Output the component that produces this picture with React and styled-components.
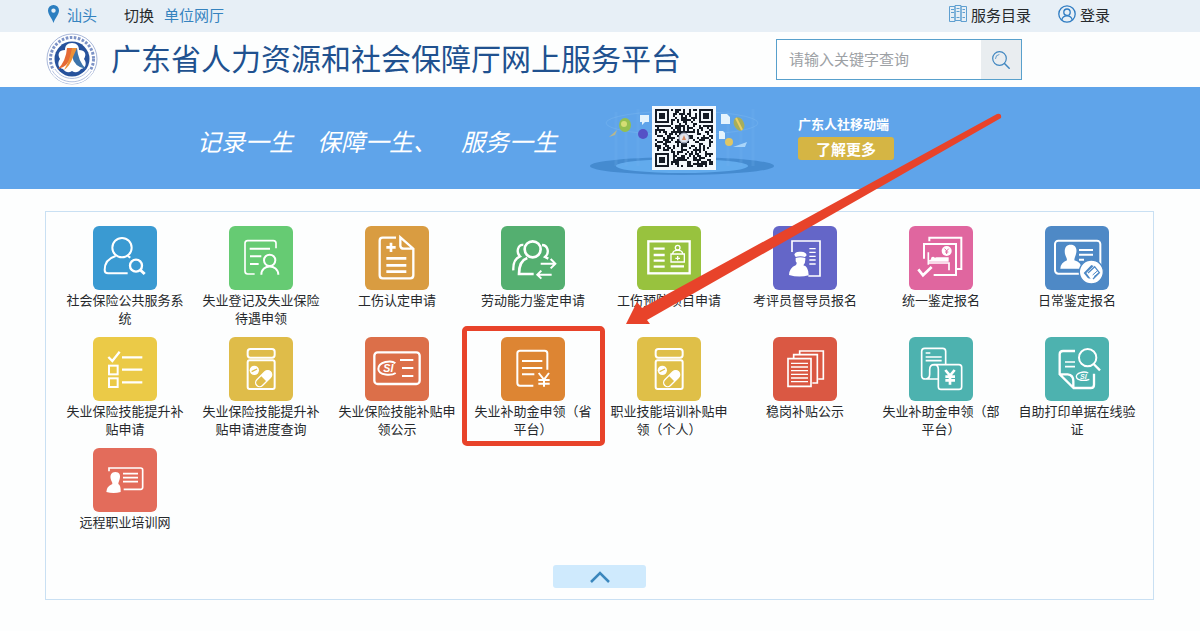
import React, { useState } from "react";
import styled, { createGlobalStyle } from "styled-components";

const Colors = {
  Page: "#fdfefe",
  TopBar: "#e7eff6",
  Text: "#26292c",
  Link: "#3583bf",
  Title: "#20518f",
  Banner: "#5fa4ea",
  Line: "#c9e0f3",
  Mark: "#e8432a",
};

const GlobalStyle = createGlobalStyle`
  * {
    box-sizing: border-box;
  }
  body {
    margin: 0;
    background: ${Colors.Page};
    color: ${Colors.Text};
    font-family: "Noto Sans CJK SC", sans-serif;
    overflow-x: hidden;
  }
  button, input {
    font-family: inherit;
    border: 0;
    padding: 0;
  }
  button {
    cursor: pointer;
  }
`;

/* ---- tile icons, all on a 192 grid ---- */

const PillBottle = ({ bg }) => (
  <>
    <rect x="56" y="36" width="81" height="26" rx="8" strokeWidth="6" />
    <rect x="56" y="70" width="81" height="86" rx="6" strokeWidth="6" />
    <circle cx="76" cy="100" r="14" fill="#fff" stroke="none" />
    <path d="M68 104L84 96" stroke={bg} strokeWidth="4" />
    <g transform="rotate(45 104 125)">
      <rect x="92" y="96" width="24" height="58" rx="12" strokeWidth="4" />
      <path d="M92 125V108A12 12 0 0 1 116 108V125Z" fill="#fff" stroke="none" />
    </g>
  </>
);

const icons = {
  personSearch: () => (
    <>
      <circle cx="87" cy="65" r="29" />
      <path d="M68 90C45 97 35 112 35 132Q35 142 45 142H104M104 90L112 95" />
      <circle cx="129" cy="119" r="18" strokeWidth="7" />
      <path d="M142 132L155 144" strokeWidth="9" />
    </>
  ),
  registerForm: () => (
    <>
      <path d="M77 144H56Q48 144 48 136V52Q48 44 56 44H133Q141 44 141 52V67" strokeWidth="5" />
      <path d="M62 68H123M63 91H97M63 114H89" />
      <circle cx="122" cy="103" r="17" />
      <path d="M97 146C97 113 147 113 148 146" />
    </>
  ),
  medicalFile: () => (
    <>
      <path d="M93 35H53Q44 35 44 44V148Q44 157 53 157H136Q145 157 145 148V68L106 34V60Q107 68 116 68H145" strokeWidth="7" />
      <path d="M64 64H92M78 50V78M64 97H124M64 118H124M64 137H124" strokeWidth="8" />
    </>
  ),
  peopleSwap: () => (
    <>
      <circle cx="95" cy="70" r="24" strokeWidth="8" />
      <path d="M79 96C58 103 54 125 54 144H98" strokeWidth="8" />
      <path d="M67 57C51 55 44 78 57 91C40 98 36 114 37 133M123 57C140 57 147 80 132 93L142 98" strokeWidth="7" />
      <path d="M119 113H162M149 99L163 113L149 127M152 146H110M121 134L109 146L121 158" strokeWidth="6" />
    </>
  ),
  preventBoard: () => (
    <>
      <rect x="34" y="46" width="124" height="96" strokeWidth="7" />
      <path d="M50 68H83M50 87H83M50 104H83M50 122H83M101 121H141" strokeWidth="7" />
      <circle cx="122" cy="65" r="7" strokeWidth="4" />
      <path d="M107 82Q109 72 122 73Q135 72 137 82M102 84H142V108H102ZM122 90V103M115 97H129" strokeWidth="4" />
    </>
  ),
  examiner: () => (
    <>
      <path d="M57 78V45H141V150H106" strokeWidth="5" />
      <path d="M109 68H128M109 79H128M109 91H128M109 102H128M109 114H128" strokeWidth="4" />
      <path d="M64 86Q66 76 82 77Q99 76 101 88L96 93Q82 88 68 93ZM68 96Q82 91 97 96Q98 112 91 118Q107 122 107 148Q78 156 48 147Q49 126 68 118Q74 112 68 106Z" fill="#fff" stroke="none" />
    </>
  ),
  bedExam: ({ bg }) => (
    <>
      <path d="M61 46V35H157V129H144M45 98V54H141V147H74" strokeWidth="6" />
      <path d="M28 130L42 148L68 123" strokeWidth="8" />
      <path d="M58 79V116M58 111H120V133" strokeWidth="5" />
      <circle cx="72" cy="98" r="6" fill="#fff" stroke="none" />
      <path d="M82 94H119V107H60V103Z" fill="#fff" stroke="none" />
      <circle cx="113" cy="75" r="15" fill="#fff" stroke="none" />
      <path d="M107 68L113 75L119 68M113 75V84M108 78H118" stroke={bg} strokeWidth="3" />
    </>
  ),
  idEdit: ({ bg }) => (
    <>
      <rect x="30" y="44" width="136" height="99" rx="10" strokeWidth="6" />
      <path d="M77 56C93 56 97 70 93 84C91 92 88 96 88 103Q109 109 110 128H46Q47 110 66 103C66 96 62 91 60 84C57 68 62 56 77 56Z" fill="#fff" stroke="none" />
      <path d="M102 72H144M102 86H144M102 101H117" strokeWidth="6" />
      <circle cx="139" cy="138" r="36" fill="#fff" stroke={bg} strokeWidth="4" />
      <path d="M116 141L139 117L146 120L124 141L137 158L129 157Z" fill={bg} stroke="none" />
      <path d="M129 141L149 122L163 140L144 159" stroke={bg} strokeWidth="4" />
      <path d="M143 147L158 134M147 152L161 141" stroke={bg} strokeWidth="3" />
    </>
  ),
  checklist: () => (
    <>
      <path d="M46 60L58 72L80 44M87 61H148M87 98H148M87 136H148" strokeWidth="7" />
      <rect x="48" y="86" width="26" height="26" strokeWidth="6" />
      <rect x="48" y="124" width="26" height="26" strokeWidth="6" />
    </>
  ),
  pillBottle: PillBottle,
  socialCard: () => (
    <>
      <rect x="28" y="46" width="136" height="95" rx="10" strokeWidth="7" />
      <path d="M91 79C79 68 40 74 40 96C41 116 80 116 92 108" strokeWidth="6" />
      <IconText x="70" y="106" size="32">SI</IconText>
      <path d="M105 69H145M111 93H145M111 117H145" />
    </>
  ),
  moneyForm: () => (
    <>
      <path d="M97 146H57Q49 146 49 138V49Q49 41 57 41H131Q139 41 139 49V98" />
      <path d="M63 72H124M63 93H124M63 112H100" />
      <path d="M113 108L129 128L144 108M129 128V149M112 129H146M112 140H146" strokeWidth="6" />
    </>
  ),
  paperStack: () => (
    <>
      <path d="M45 65H114V148H45ZM62 62V53H133V138H118M80 50V42H151V126H136" strokeWidth="5" />
      <path d="M54 79H105M54 90H105M54 101H105M54 112H105M54 123H105M54 134H105" strokeWidth="4" />
    </>
  ),
  receiptYuan: () => (
    <>
      <path d="M110 80V43Q110 34 101 34H47Q38 34 38 43V116Q38 126 50 126Q62 126 62 112V98Q62 83 76 83H150Q158 83 158 91V149Q158 157 150 157H96Q88 157 88 149V97Q88 84 76 83M50 126H88" strokeWidth="5" />
      <path d="M50 48H64M50 60H98M50 71H98" strokeWidth="5" />
      <path d="M109 99L123 116L137 99M123 116V143M109 119H138M109 130H138" strokeWidth="8" />
    </>
  ),
  printVerify: () => (
    <>
      <path d="M90 42H54Q44 42 44 52V112L86 153H137Q147 153 147 143V110M44 112H68Q85 114 85 132V152" strokeWidth="7" />
      <path d="M60 75H90M60 89H90" strokeWidth="5" />
      <circle cx="128" cy="62" r="26" />
      <path d="M146 81L165 100" strokeWidth="7" />
      <path d="M130 108C115 101 94 108 94 119C95 131 118 133 133 127" strokeWidth="4" />
      <IconText x="115" y="127" size="21">SI</IconText>
    </>
  ),
  remoteTraining: () => (
    <>
      <path d="M48 70V60H143Q149 60 149 66V118Q149 124 143 124H92" strokeWidth="5" />
      <path d="M90 77H135M90 89H135M90 101H135" strokeWidth="5" />
      <path d="M67 72C80 72 83 82 80 93C79 99 76 102 76 108Q84 112 83 132Q62 138 40 132Q40 116 58 108C59 102 54 99 53 92C51 81 55 72 67 72Z" fill="#fff" stroke="none" />
    </>
  ),
};

const services = [
  { name: "社会保险公共服务系统", icon: "personSearch", bg: "#3a9ad2" },
  { name: "失业登记及失业保险待遇申领", icon: "registerForm", bg: "#66cb73" },
  { name: "工伤认定申请", icon: "medicalFile", bg: "#d99c41" },
  { name: "劳动能力鉴定申请", icon: "peopleSwap", bg: "#54af70" },
  { name: "工伤预防项目申请", icon: "preventBoard", bg: "#98c23e" },
  { name: "考评员督导员报名", icon: "examiner", bg: "#6466c8" },
  { name: "统一鉴定报名", icon: "bedExam", bg: "#e0669f" },
  { name: "日常鉴定报名", icon: "idEdit", bg: "#4e89c6" },
  { name: "失业保险技能提升补贴申请", icon: "checklist", bg: "#ebca47" },
  { name: "失业保险技能提升补贴申请进度查询", icon: "pillBottle", bg: "#dfbc49" },
  { name: "失业保险技能补贴申领公示", icon: "socialCard", bg: "#dc6f49" },
  { name: "失业补助金申领（省平台）", icon: "moneyForm", bg: "#dd8533", marked: true },
  { name: "职业技能培训补贴申领（个人）", icon: "pillBottle", bg: "#dfbf48" },
  { name: "稳岗补贴公示", icon: "paperStack", bg: "#da5843" },
  { name: "失业补助金申领（部平台）", icon: "receiptYuan", bg: "#4db2af" },
  { name: "自助打印单据在线验证", icon: "printVerify", bg: "#4db2af" },
  { name: "远程职业培训网", icon: "remoteTraining", bg: "#e36c5b" },
];

const IconText = ({ x, y, size, children }) => (
  <text
    x={x}
    y={y}
    fontSize={size}
    textAnchor="middle"
    fill="#fff"
    stroke="none"
    fontWeight="700"
    fontStyle="italic"
    fontFamily="Liberation Sans, sans-serif"
  >
    {children}
  </text>
);

const PinIcon = () => (
  <svg width="11" height="18" viewBox="0 0 11 18" aria-hidden="true">
    <path d="M5.500 0A5.400 5.400 0 0 0 0 5.500C0 9.500 4 13 5.500 18C7 13 11 9.500 11 5.500A5.400 5.400 0 0 0 5.500 0ZM5.500 7.800A2.200 2.200 0 1 1 5.500 3.400A2.200 2.200 0 0 1 5.500 7.800Z" fill="#2d7fc0" />
  </svg>
);

const CatalogIcon = () => (
  <svg width="18" height="18" viewBox="0 0 18 18" fill="none" stroke="#5f9fd0" aria-hidden="true">
    <path d="M.5 1.500H6V16.500H.5ZM6 .5H12V15.500H6ZM12 1.500H17.500V16.500H12Z" />
    <path d="M2 4.500H5M2 7.500H5M2 12.500H5M7.500 3.500H10.500M7.500 6.500H10.500M7.500 12.500H10.500M13.500 4.500H16M13.500 7.500H16M13.500 12.500H16" />
  </svg>
);

const UserIcon = () => (
  <svg width="18" height="18" viewBox="0 0 18 18" fill="none" stroke="#2f7cc2" strokeWidth="1.3" aria-hidden="true">
    <circle cx="9" cy="9" r="8.200" />
    <circle cx="9" cy="7.200" r="3.200" />
    <path d="M3.800 15C4.300 11.800 6.500 10.800 9 10.800S13.700 11.800 14.200 15" />
  </svg>
);

const SearchIcon = () => (
  <svg width="18" height="18" viewBox="0 0 18 18" fill="none" stroke="#4087c0" strokeLinecap="round" aria-hidden="true">
    <circle cx="7.500" cy="7.500" r="6.800" strokeWidth="1.200" />
    <path d="M3.500 7.500A4 4 0 0 1 7 3.500" strokeWidth=".8" />
    <path d="M12.500 12.500L17.200 17.200" strokeWidth="1.500" />
  </svg>
);

const Emblem = () => (
  <svg width="52" height="52" viewBox="0 0 52 52" aria-hidden="true">
    <circle cx="26" cy="26" r="25" fill="#fff" stroke="#a9b8da" strokeWidth="1" />
    <circle cx="26" cy="26" r="21.500" fill="none" stroke="#7d93c6" strokeWidth="3" strokeDasharray="2.600 1.500" />
    <path d="M7 37A22 22 0 0 0 45 37" fill="none" stroke="#fff" strokeWidth="6" />
    <path d="M6.500 38A23 23 0 0 0 45.500 38M9 36A20 20 0 0 0 43 36" fill="none" stroke="#b4c1df" strokeWidth="1" />
    <circle cx="26" cy="26" r="17.500" fill="#27529c" />
    <path d="M26 10C31 10 33 13 33 17C39 17 41 21 38 26C41 30 40 35 35 36C32 40 29 40 26 38C23 40 20 40 17 36C12 35 11 30 14 26C11 21 13 17 19 17C19 13 21 10 26 10Z" fill="#fff" />
    <path d="M21 15H27L25 23Q22 34 12 36Q20 28 21 15Z" fill="#e56a35" />
    <path d="M26 15H31Q32 28 40 36Q28 34 26 23Z" fill="#3d74ab" />
    <path d="M26 15H31L27 24Q24 33 18 37Q24 27 26 15Z" fill="#ec9138" />
  </svg>
);

const QR_SIZE = 29;

const inFinder = (x, y) =>
  (x < 8 && y < 8) || (x > QR_SIZE - 9 && y < 8) || (x < 8 && y > QR_SIZE - 9);

const qrPath = () => {
  let d = "";
  let seed = 2019;
  for (let y = 0; y < QR_SIZE; y++) {
    for (let x = 0; x < QR_SIZE; x++) {
      seed = (seed * 1103515245 + 12345) % 2147483648;
      if (!inFinder(x, y) && (seed >> 16) % 100 < 53) d += `M${x} ${y}h1v1h-1z`;
    }
  }
  [[0, 0], [22, 0], [0, 22]].forEach(([x, y]) => {
    d += `M${x} ${y}h7v7h-7zM${x + 1} ${y + 1}v5h5v-5zM${x + 2} ${y + 2}h3v3h-3z`;
  });
  return d;
};

const QrArt = () => (
  <svg width="190" height="102" viewBox="0 0 190 102" role="img" aria-label="广东人社移动端二维码">
    <ellipse cx="94" cy="79" rx="92" ry="9" fill="#458bd0" />
    <ellipse cx="94" cy="79" rx="66" ry="7" fill="#62abed" />
    <path d="M28 79V25M38 79V32M50 79V22M140 79V24M153 79V31M165 79V22" stroke="#76b4f0" opacity=".2" strokeWidth="3" />
    <ellipse cx="94" cy="36" rx="76" ry="12" fill="none" stroke="#84bdf2" opacity=".35" />
    <ellipse cx="37" cy="38" rx="6" ry="7" fill="#94bf4f" />
    <circle cx="36" cy="37" r="3" fill="#d5dd74" />
    <circle cx="55" cy="47" r="5" fill="#5551c6" />
    <path d="M52 28H61V35H57L54 38V35H52ZM133 27H139L142 30V37H133ZM131 44H135L137 46V52H131Z" fill="#e4f3fd" />
    <path d="M21 50L29 43L27 48Z" fill="#b8b78c" />
    <ellipse cx="151" cy="37" rx="5" ry="7" fill="#a7ae5b" transform="rotate(-25 151 37)" />
    <path d="M148 31L154 43" stroke="#e9cf67" strokeWidth="2" />
    <circle cx="141" cy="55" r="4" fill="#dfc665" />
    <path d="M145 60L159 55L157 60Z" fill="#a9d5fa" />
    <rect x="64" y="19" width="64" height="64" fill="#f3f8fd" />
    <path d={qrPath()} transform="translate(67 22) scale(2)" fill="#141b26" shapeRendering="crispEdges" />
    <circle cx="96" cy="51" r="5" fill="#dfe3ec" stroke="#8d95ad" />
    <path d="M94 53L96 48L98 53Z" fill="#d78a62" />
  </svg>
);

const ServiceTile = ({ name, icon, bg, marked }) => {
  const Icon = icons[icon];
  return (
    <Tile $marked={marked}>
      <TileLink href="#">
        <TileIcon $bg={bg} viewBox="0 0 192 192" aria-hidden="true">
          <Icon bg={bg} />
        </TileIcon>
        <TileName>{name}</TileName>
      </TileLink>
      {marked && (
        <Arrow viewBox="0 0 380 216" aria-hidden="true">
          <path d="M2 211L13 189L18 195L373 1Q378 0 377 5L23 207L26 211Z" fill={Colors.Mark} />
        </Arrow>
      )}
    </Tile>
  );
};

const App = () => {
  const [open, setOpen] = useState(true);
  const shown = open ? services : services.slice(0, 8);

  return (
    <>
      <GlobalStyle />
      <TopBar>
        <TopGroup>
          <City href="#"><PinIcon />汕头</City>
          <Switch>
            切换
            <TopLink href="#" $blue>单位网厅</TopLink>
          </Switch>
        </TopGroup>
        <TopGroup>
          <TopLink href="#"><CatalogIcon />服务目录</TopLink>
          <TopLink href="#"><UserIcon />登录</TopLink>
        </TopGroup>
      </TopBar>

      <Header>
        <Brand>
          <Emblem />
          <Title>广东省人力资源和社会保障厅网上服务平台</Title>
        </Brand>
        <SearchForm role="search" onSubmit={(e) => e.preventDefault()}>
          <SearchInput type="text" aria-label="关键字查询" placeholder="请输入关键字查询" />
          <SearchButton type="submit" aria-label="查询"><SearchIcon /></SearchButton>
        </SearchForm>
      </Header>

      <Banner>
        <Slogan>
          <Phrase>记录一生</Phrase>
          <Phrase>保障一生、</Phrase>
          <Phrase>服务一生</Phrase>
        </Slogan>
        <QrArt />
        <Promo>
          <PromoTitle>广东人社移动端</PromoTitle>
          <MoreButton type="button">了解更多</MoreButton>
        </Promo>
      </Banner>

      <Panel>
        <Grid>
          {shown.map((s) => <ServiceTile key={s.name} {...s} />)}
        </Grid>
        <Toggle type="button" aria-label={open ? "收起" : "展开"} onClick={() => setOpen(!open)}>
          <Chevron $open={open} width="20" height="12" viewBox="0 0 20 12" aria-hidden="true">
            <path d="M1 11L10 2L19 11" fill="none" stroke="#3b87bd" strokeWidth="2.500" />
          </Chevron>
        </Toggle>
      </Panel>
    </>
  );
};

const TopBar = styled.nav`
  display: flex;
  justify-content: space-between;
  height: 32px;
  padding: 0 90px 4px 48px;
  background: ${Colors.TopBar};
  font-size: 15px;
`;

const TopGroup = styled.div`
  display: flex;
  align-items: center;
  gap: 27px;
`;

const TopLink = styled.a`
  display: flex;
  align-items: center;
  gap: 4px;
  color: ${(p) => (p.$blue ? Colors.Link : Colors.Text)};
  text-decoration: none;
`;

const City = styled(TopLink)`
  gap: 8px;
  color: ${Colors.Link};
`;

const Switch = styled.div`
  display: flex;
  gap: 10px;
`;

const Header = styled.header`
  display: flex;
  align-items: center;
  justify-content: space-between;
  height: 55px;
  padding: 0 178px 0 46px;
`;

const Brand = styled.div`
  display: flex;
  align-items: center;
  gap: 13px;
  padding-bottom: 2px;
`;

const Title = styled.h1`
  margin: 0;
  padding-bottom: 4px;
  color: ${Colors.Title};
  font-size: 30px;
  font-weight: 400;
  line-height: 40px;
  white-space: nowrap;
`;

const SearchForm = styled.form`
  display: flex;
  width: 246px;
  height: 41px;
  border: 1px solid #58a0cc;
`;

const SearchInput = styled.input`
  flex: 1;
  min-width: 0;
  padding: 0 12px 2px;
  background: #fff;
  font-size: 15px;
  &::placeholder {
    color: #9da1a5;
  }
`;

const SearchButton = styled.button`
  display: flex;
  align-items: center;
  justify-content: center;
  width: 40px;
  background: #e9edf0;
`;

const Banner = styled.section`
  display: flex;
  height: 102px;
  padding-left: 197px;
  background: ${Colors.Banner};
  color: #fff;
`;

const Slogan = styled.p`
  display: flex;
  align-items: center;
  gap: 24px;
  width: 391px;
  margin: 0;
  padding-top: 6px;
  font-size: 24px;
  font-style: italic;
  line-height: 32px;
`;

const Phrase = styled.span`
  white-space: nowrap;
`;

const Promo = styled.div`
  display: flex;
  flex-direction: column;
  align-items: flex-start;
  padding: 28px 0 0 20px;
`;

const PromoTitle = styled.strong`
  font-size: 13px;
  line-height: 18px;
  margin-bottom: 4px;
`;

const MoreButton = styled.button`
  width: 96px;
  height: 23px;
  border-radius: 3px;
  background: #d5b544;
  color: #fff;
  font-size: 15px;
  font-weight: 700;
  line-height: 20px;
`;

const Panel = styled.main`
  display: flex;
  flex-direction: column;
  align-items: center;
  margin: 22px 46px 24px 45px;
  padding: 14px 8px 11px;
  border: 1px solid ${Colors.Line};
`;

const Grid = styled.ul`
  display: grid;
  grid-template-columns: repeat(8, 1fr);
  grid-auto-rows: minmax(101px, auto);
  row-gap: 10px;
  width: 100%;
  margin: 0 0 16px;
  padding: 0 0 0 3px;
  list-style: none;
`;

const Tile = styled.li`
  position: relative;
  &::after {
    content: "";
    display: ${(p) => (p.$marked ? "block" : "none")};
    position: absolute;
    inset: -11px -4px -8px -3px;
    border: 5px solid ${Colors.Mark};
    border-radius: 5px;
    pointer-events: none;
  }
`;

const TileLink = styled.a`
  display: flex;
  flex-direction: column;
  align-items: center;
  gap: 1px;
  color: ${Colors.Text};
  text-decoration: none;
`;

const TileIcon = styled.svg`
  width: 64px;
  height: 64px;
  border-radius: 6px;
  background: ${(p) => p.$bg};
  fill: none;
  stroke: #fff;
  stroke-width: 6;
`;

const TileName = styled.span`
  width: 122px;
  font-size: 13px;
  line-height: 18px;
  text-align: center;
`;

const Arrow = styled.svg`
  position: absolute;
  z-index: 1;
  left: 159px;
  top: -224px;
  width: 380px;
  height: 216px;
  pointer-events: none;
`;

const Toggle = styled.button`
  display: flex;
  align-items: center;
  justify-content: center;
  width: 93px;
  height: 23px;
  border-radius: 3px;
  background: #cfeafd;
`;

const Chevron = styled.svg`
  transform: ${(p) => (p.$open ? "none" : "rotate(180deg)")};
`;

export default App;
